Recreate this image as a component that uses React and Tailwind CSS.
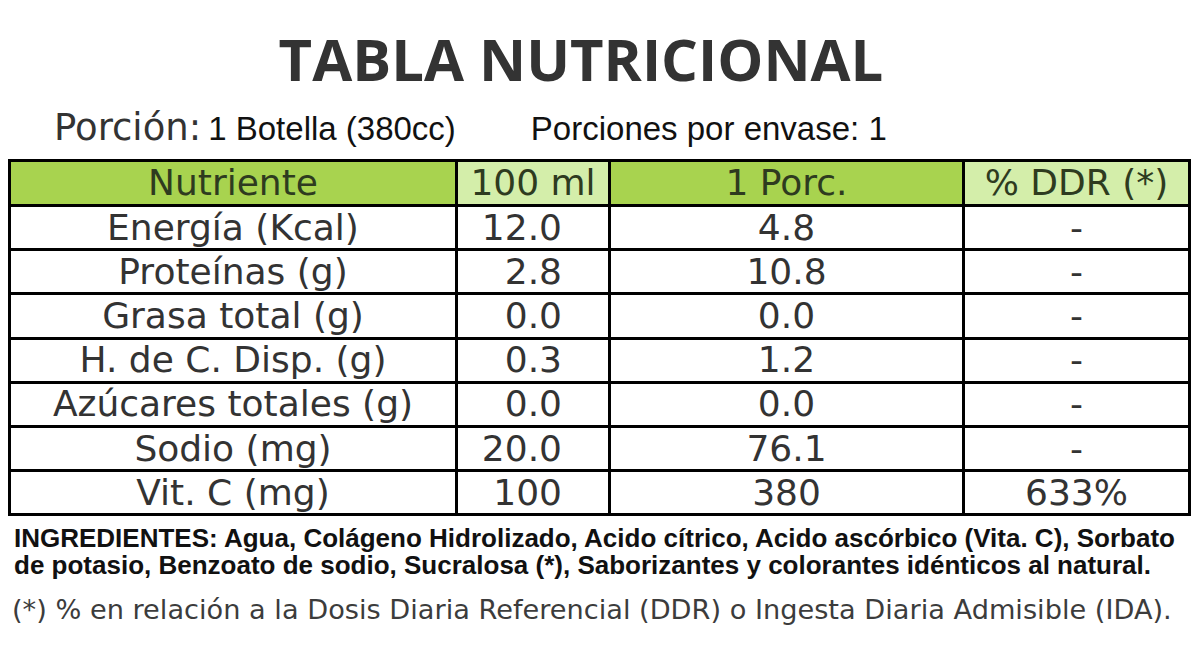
const rows = [
  ["Energía (Kcal)", "12.0", "4.8", "-"],
  ["Proteínas (g)", "2.8", "10.8", "-"],
  ["Grasa total (g)", "0.0", "0.0", "-"],
  ["H. de C. Disp. (g)", "0.3", "1.2", "-"],
  ["Azúcares totales (g)", "0.0", "0.0", "-"],
  ["Sodio (mg)", "20.0", "76.1", "-"],
  ["Vit. C (mg)", "100", "380", "633%"],
];

const dejavu = "font-['DejaVu_Sans',sans-serif]";

const App = () => {
  return (
    <div className="w-[1200px] h-[647px] bg-white overflow-hidden flex flex-col">
      <h1 className="font-['Open_Sans',sans-serif] font-bold text-[58px] leading-none text-[#333] text-center pr-[38px] pt-[30px]">
        TABLA NUTRICIONAL
      </h1>

      <div className="flex items-baseline h-[40px] mt-[21px] pl-[54px] font-['Liberation_Sans',Arial,sans-serif] text-[33px] leading-none text-[#111]">
        <span className={`${dejavu} text-[37px] text-[#333]`}>Porción:</span>
        <span className="ml-[7px]">1 Botella (380cc)</span>
        <span className="ml-[75px]">Porciones por envase: 1</span>
      </div>

      <table className={`mt-[10px] ml-[8px] w-[1183px] border-collapse ${dejavu} text-[36px] leading-none text-[#333]`}>
        <colgroup>
          <col className="w-[447px]" />
          <col className="w-[153px]" />
          <col className="w-[354px]" />
          <col />
        </colgroup>
        <thead>
          <tr className="h-[45px] text-[#2e3b1f]">
            <th className="border-[3px] border-black bg-[#a8d34f] font-normal">Nutriente</th>
            <th className="border-[3px] border-black bg-[#d4eeaa] font-normal">100 ml</th>
            <th className="border-[3px] border-black bg-[#a8d34f] font-normal">1 Porc.</th>
            <th className="border-[3px] border-black bg-[#d4eeaa] font-normal">% DDR (*)</th>
          </tr>
        </thead>
        <tbody>
          {rows.map(([name, ml, porc, ddr]) => (
            <tr key={name} className="h-[44.2px]">
              <td className="border-[3px] border-black text-center">{name}</td>
              <td className="border-[3px] border-black text-right pr-[46px]">{ml}</td>
              <td className="border-[3px] border-black text-center">{porc}</td>
              <td className="border-[3px] border-black text-center">{ddr}</td>
            </tr>
          ))}
        </tbody>
      </table>

      <p className="mt-[9px] pl-[14px] font-['Liberation_Sans',Arial,sans-serif] font-bold text-[26px] leading-[27px] text-[#111] whitespace-nowrap">
        INGREDIENTES: Agua, Colágeno Hidrolizado, Acido cítrico, Acido ascórbico (Vita. C), Sorbato
        <br />
        de potasio, Benzoato de sodio, Sucralosa (*), Saborizantes y colorantes idénticos al natural.
      </p>

      <p className={`mt-[17px] pl-[12px] ${dejavu} text-[27.2px] leading-none text-[#3c3c3c] whitespace-nowrap`}>
        (*) % en relación a la Dosis Diaria Referencial (DDR) o Ingesta Diaria Admisible (IDA).
      </p>
    </div>
  );
};

export default App;
